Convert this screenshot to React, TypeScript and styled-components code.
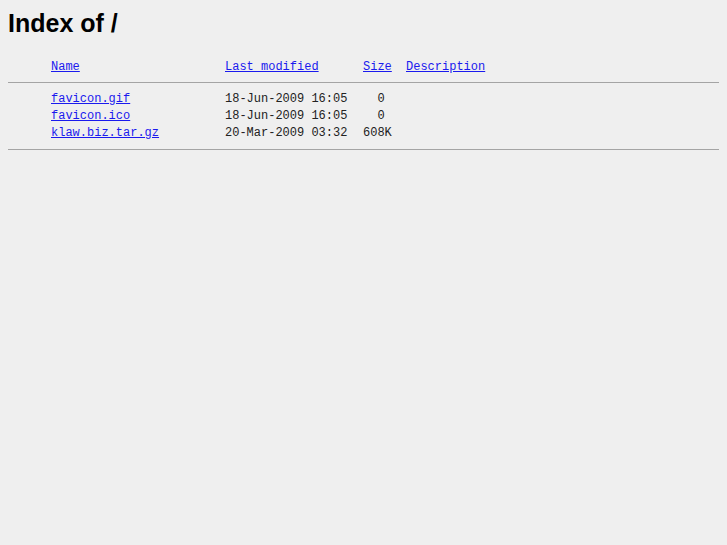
import styled, { createGlobalStyle } from "styled-components"

const GlobalStyle = createGlobalStyle`
    html, body {
        background: #efefef;
    }
    body {
        margin: 8px;
        font-family: "Liberation Sans", Arial, sans-serif;
        color: #111;
    }
`

type Entry = {
    name: string
    modified: string
    size: string
}

const entries: Entry[] = [
    { name: "favicon.gif", modified: "18-Jun-2009 16:05", size: "  0 " },
    { name: "favicon.ico", modified: "18-Jun-2009 16:05", size: "  0 " },
    { name: "klaw.biz.tar.gz", modified: "20-Mar-2009 03:32", size: "608K" },
]

export default function App() {
    return (
        <>
            <GlobalStyle />
            <Title>Index of /</Title>
            <Listing>
                <Row>
                    <Cell />
                    <Cell><Link href="#">Name</Link></Cell>
                    <Cell><Link href="#">Last modified</Link></Cell>
                    <Cell><Link href="#">Size</Link></Cell>
                    <Cell><Link href="#">Description</Link></Cell>
                </Row>
                <Rule $before={6} $after={8} />
                {entries.map(entry => (
                    <Row key={entry.name}>
                        <Cell />
                        <Cell><Link href="#">{entry.name}</Link></Cell>
                        <Cell>{entry.modified}</Cell>
                        <Cell>{entry.size}</Cell>
                        <Cell />
                    </Row>
                ))}
                <Rule $before={7} $after={0} />
            </Listing>
        </>
    )
}

const Title = styled.h1`
    margin: 1px 0 0;
    font-size: 25px;
    line-height: 28px;
    font-weight: bold;
    color: #000;
`

const Listing = styled.div`
    margin-top: 22px;
    font-family: "Liberation Mono", "Courier New", monospace;
    font-size: 12px;
    line-height: 17px;
    color: #222;
`

const Row = styled.div`
    display: grid;
    grid-template-columns: 43px 174px 138px 43px 1fr;
    white-space: pre;
`

const Cell = styled.span`
    white-space: pre;
`

const Link = styled.a`
    color: #1a1aee;
    text-decoration: underline;
`

const Rule = styled.hr<{ $before: number; $after: number }>`
    margin: ${p => p.$before}px 0 ${p => p.$after}px;
    border: none;
    border-top: 1px solid #a4a4a4;
    height: 0;
`
